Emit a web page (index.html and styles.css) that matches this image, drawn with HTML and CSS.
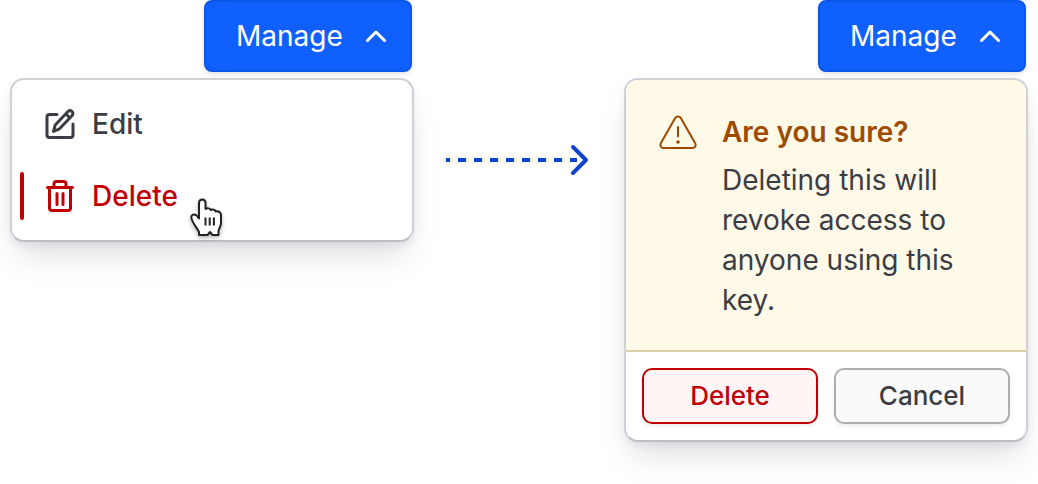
FILE: index.html
```
<!DOCTYPE html>
<html lang="en">
<head>
  <meta charset="utf-8">
  <title>Delete confirmation</title>
  <link rel="stylesheet" href="styles.css">
</head>
<body>
  <main class="flow">
    <!-- Open menu -->
    <section class="dropdown">
      <button type="button" class="btn-manage" aria-expanded="true">
        Manage
        <svg class="chevron" viewBox="0 0 32 32" aria-hidden="true">
          <path d="M7.5 20.5 16 12l8.500 8.500"/>
        </svg>
      </button>
      <div class="panel menu">
        <button type="button" class="menu-item">
          <svg class="menu-icon" viewBox="0 0 32 32" aria-hidden="true">
            <path d="M13 6.500H5.500a2.500 2.500 0 0 0-2.500 2.500v18A2.500 2.500 0 0 0 5.500 29.500h21a2.500 2.500 0 0 0 2.500-2.500V16"/>
            <path d="M9.500 23.500l1.700-6.500L24 3.500a2.900 2.900 0 0 1 4 0 2.900 2.900 0 0 1 0 4.200L15.500 20.800zM22 6l4 4"/>
          </svg>
          Edit
        </button>
        <button type="button" class="menu-item danger">
          <svg class="menu-icon" viewBox="0 0 32 32" aria-hidden="true">
            <path d="M3.500 7.500h25M5.500 8v20a2.500 2.500 0 0 0 2.500 2.500h16a2.500 2.500 0 0 0 2.500-2.500V8M10 7V4a2.500 2.500 0 0 1 2.500-2.500h7A2.500 2.500 0 0 1 22 4v3M13 13.500v11M19 13.500v11"/>
          </svg>
          Delete
          <svg class="pointer" viewBox="0 0 36 44" aria-hidden="true">
            <path d="M11 39v-3C9.500 32.500 6 29 4.500 25c-1.500-3-2.200-5 .2-6.200 2.300-.8 4.500 1 6.300 3.700V7c0-4.800 6.500-4.800 6.500 0v6c2-1.200 4.500-.8 5.300 1 2-.9 4.200-.2 5 1.500 3-.7 5.200 1 5.200 4V27c0 3.500-2 5-2.500 8v4h-6L22 36l-2.500 3z"/>
            <path class="lines" d="M17.500 21.500v8M21.700 21.500v8M25.900 21.500v8"/>
          </svg>
        </button>
      </div>
    </section>

    <svg class="arrow" viewBox="0 0 148 36" aria-hidden="true">
      <path class="dashes" d="M1 18h131"/>
      <path class="head" d="M128 5l13 13-13 13"/>
    </svg>

    <!-- Menu replaced by the confirmation -->
    <section class="dropdown">
      <button type="button" class="btn-manage" aria-expanded="true">
        Manage
        <svg class="chevron" viewBox="0 0 32 32" aria-hidden="true">
          <path d="M7.5 20.5 16 12l8.500 8.500"/>
        </svg>
      </button>
      <div class="panel">
        <div class="warning">
          <svg class="warning-icon" viewBox="0 0 40 40" aria-hidden="true">
            <path d="M17.200 6a3.300 3.300 0 0 1 5.600 0l14.400 25.300c1.200 2.100-.3 4.700-2.700 4.700H5.500c-2.400 0-3.900-2.600-2.700-4.700z"/>
            <path d="M20 15v9.500"/>
            <circle cx="20" cy="30" r="1.800"/>
          </svg>
          <div class="warning-body">
            <h2>Are you sure?</h2>
            <p>Deleting this will revoke access to anyone using this key.</p>
          </div>
        </div>
        <div class="actions">
          <button type="button" class="btn btn-danger">Delete</button>
          <button type="button" class="btn">Cancel</button>
        </div>
      </div>
    </section>
  </main>
</body>
</html>
```
FILE: styles.css
```
* {
  margin: 0;
  padding: 0;
  box-sizing: border-box;
}

body {
  background: #fff;
  color: #3b3d45;
  font-family: Inter, "Liberation Sans", sans-serif;
  font-size: 28px;
  line-height: 40px;
}

button {
  font: inherit;
  color: inherit;
  cursor: pointer;
}

svg {
  fill: none;
  stroke: currentColor;
  stroke-linecap: round;
  stroke-linejoin: round;
  flex-shrink: 0;
}

.flow {
  display: grid;
  grid-template-columns: 1fr 210px 1fr;
  padding: 0 10px 42px;
}

.dropdown {
  display: flex;
  flex-direction: column;
  gap: 6px;
}

.btn-manage {
  display: flex;
  align-items: center;
  justify-content: space-between;
  align-self: flex-end;
  min-width: 208px;
  height: 72px;
  margin-right: 2px;
  padding: 0 18px 0 30px;
  color: #fff;
  background: #1060ff;
  border: 2px solid #0c56e9;
  border-radius: 8px;
  box-shadow: 0 2px 4px rgba(101, 106, 118, 0.2);
}

.chevron {
  width: 32px;
  height: 32px;
  stroke-width: 3;
}

.panel {
  background: #fff;
  border: 2px solid #d0d1d8;
  border-bottom-color: #bcbec6;
  border-radius: 14px;
  box-shadow: 0 4px 6px rgba(101, 106, 118, 0.1),
              0 20px 32px -8px rgba(101, 106, 118, 0.22);
}

/* Menu */
.menu {
  padding: 8px;
}

.menu-item {
  display: flex;
  align-items: center;
  gap: 16px;
  position: relative;
  width: 100%;
  height: 72px;
  font-weight: 500;
  background: none;
  border: 0;
}

.menu-item::before {
  content: '';
  width: 4px;
  height: 48px;
  margin-right: 4px;
  border-radius: 2px;
}

.menu-icon {
  width: 32px;
  height: 32px;
  stroke-width: 3;
}

.danger {
  color: #c00005;
}

.danger::before {
  background: #c00005;
}

.pointer {
  position: absolute;
  left: 168px;
  top: 36px;
  width: 36px;
  height: 44px;
  fill: #fff;
  stroke: #222;
  stroke-width: 2;
  filter: drop-shadow(0 2px 2px rgba(0, 0, 0, 0.3));
}

.pointer .lines {
  stroke-linecap: butt;
}

/* Arrow */
.arrow {
  width: 148px;
  height: 36px;
  margin-top: 142px;
  justify-self: center;
  color: #0d44cc;
  stroke-width: 4;
}

.arrow .dashes {
  stroke-linecap: butt;
  stroke-dasharray: 8;
  stroke-dashoffset: 4;
}

/* Confirmation */
.warning {
  display: flex;
  gap: 24px;
  padding: 32px;
  padding-bottom: 30px;
  background: #fff9e8;
  border-bottom: 2px solid #ddcfa8;
  border-radius: 12px 12px 0 0;
}

.warning-icon {
  width: 40px;
  height: 40px;
  color: #9e4b00;
  stroke-width: 2;
}

.warning-icon circle {
  fill: currentColor;
  stroke: none;
}

.warning-body h2 {
  margin-bottom: 8px;
  color: #9e4b00;
  font-size: 28px;
  font-weight: 600;
}

.actions {
  display: flex;
  gap: 16px;
  padding: 16px;
}

.btn {
  flex: 1;
  height: 56px;
  font-size: 26px;
  font-weight: 500;
  background: #fafafa;
  border: 2px solid #adaeb3;
  border-radius: 10px;
  box-shadow: 0 2px 4px rgba(101, 106, 118, 0.12);
}

.btn-danger {
  color: #c00005;
  background: #fff5f5;
  border-color: #c00005;
}
```
